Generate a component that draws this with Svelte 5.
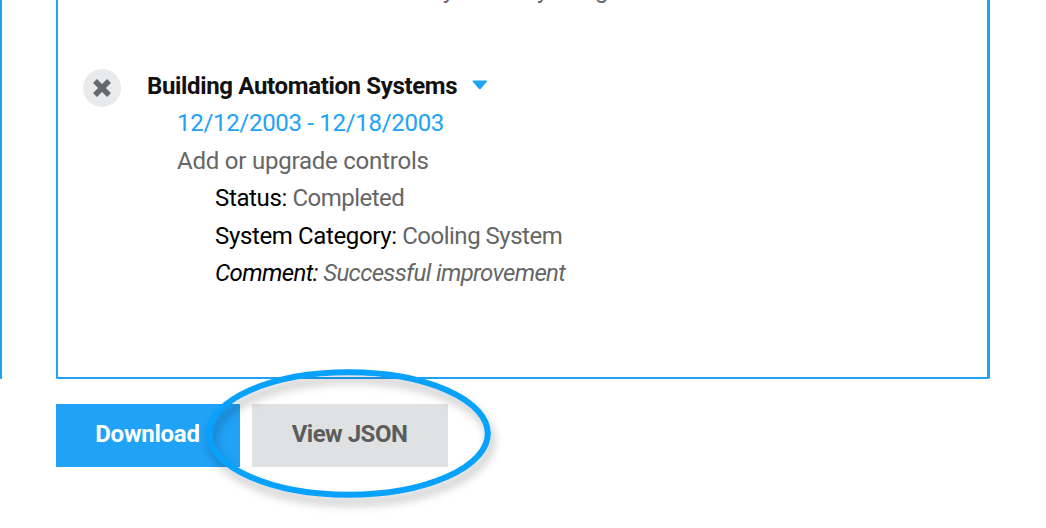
<script>
  const details = [
    { label: 'Status:', value: 'Completed', cls: 'status' },
    { label: 'System Category:', value: 'Cooling System', cls: 'category' },
    { label: 'Comment:', value: 'Successful improvement', cls: 'comment' }
  ];
</script>

<div class="page">
  <div class="columns">
    <div class="previous"></div>
    <section class="panel">
      <div class="clipped"><span>y</span><span>y</span><span>g</span></div>
      <div class="entry">
        <button class="remove" aria-label="Remove">
          <svg width="20" height="20" viewBox="0 0 20 20"><path d="M3 3L17 17M17 3L3 17" stroke="#68696a" stroke-width="5.4" /></svg>
        </button>
        <div class="body">
          <div class="title">
            <span>Building Automation Systems</span>
            <svg width="16" height="10" viewBox="0 0 16 10"><path d="M1 .5H14.5Q15.6 .7 14.8 1.7L8.8 8.7Q7.8 9.8 6.8 8.7L.8 1.7Q0 .7 1 .5Z" fill="#20a2f7" /></svg>
          </div>
          <div class="date">12/12/2003 - 12/18/2003</div>
          <div class="desc">Add or upgrade controls</div>
          {#each details as d}
            <div class="detail {d.cls}"><b>{d.label}</b> <span>{d.value}</span></div>
          {/each}
        </div>
      </div>
    </section>
  </div>
  <div class="actions">
    <button class="download"><span>Download</span></button>
    <button class="json"><span>View JSON</span></button>
  </div>
  <svg class="ring" width="320" height="168" viewBox="0 0 320 168">
    <ellipse cx="158.5" cy="73.5" rx="139.3" ry="61.3" />
  </svg>
</div>

<style>
  :global(body) { background: #fff; }
  .page { position: relative; width: 1046px; height: 528px; overflow: hidden; background: #fff; font: 24px/37.5px Roboto, sans-serif; color: #666; }
  .columns { display: flex; gap: 54px; height: 379px; }
  .previous { width: 2px; background: #20a2f7; border-radius: 0 0 1px 0; }
  .panel { box-sizing: border-box; width: 934px; border: solid #20a2f7; border-width: 0 3px 2px 2px; border-radius: 0 0 2px 2px; }
  .clipped { height: 67.75px; display: flex; padding-left: 385px; line-height: 28px; }
  .clipped span { width: 94px; margin-top: -24px; }
  .clipped span:nth-child(2) { width: 58px; }
  .entry { display: flex; gap: 26px; padding-left: 25px; }
  button { border: 0; padding: 0; font: inherit; }
  .remove { width: 38px; height: 38px; margin-top: 1.1px; border-radius: 50%; background: #e9eaec; display: grid; place-items: center; }
  .body { white-space: nowrap; }
  .title { color: #111; font-weight: 700; display: flex; align-items: center; gap: 15px; letter-spacing: -.35px; }
  .title svg { margin-top: -3px; }
  .date, .desc { padding-left: 30px; }
  .date { color: #20a2f7; letter-spacing: -.3px; }
  .desc { letter-spacing: -.22px; }
  .detail { padding-left: 68px; letter-spacing: -.5px; }
  .detail b { font-weight: 400; color: #000; letter-spacing: -.36px; }
  .comment { font-style: italic; letter-spacing: -.66px; }
  .comment b { letter-spacing: -.6px; }
  .actions { display: flex; gap: 12px; padding: 25px 0 0 56px; }
  .actions button { height: 63px; font-weight: 700; padding: 0 1px 2px 0; }
  .download { width: 184px; background: #20a2f7; color: #fff; letter-spacing: -.25px; }
  .json { width: 196px; background: #dfe1e3; color: #5c5c5c; letter-spacing: -.5px; }
  .ring { position: absolute; left: 190px; top: 360px; pointer-events: none; filter: drop-shadow(3px 7px 5px rgba(0, 0, 0, .26)); }
  .ring ellipse { fill: none; stroke: #08a1fc; stroke-width: 6; }
</style>
